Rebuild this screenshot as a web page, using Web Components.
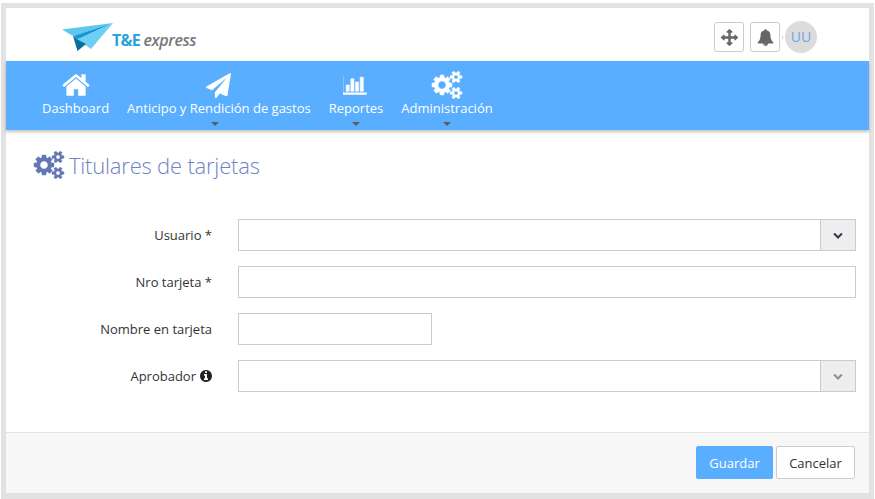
<!DOCTYPE html>
<html lang="es">
<head>
<meta charset="utf-8">
<title>Titulares de tarjetas</title>
<style>
    html, body { margin: 0; height: 100%; background: #fff; }
    body { font: 13px "Open Sans", sans-serif; color: #333; overflow: hidden; }
</style>
</head>
<body>
<app-frame>
    <app-header slot="header"></app-header>
    <app-nav slot="nav">
        <nav-item label="Dashboard" icon="home"></nav-item>
        <nav-item label="Anticipo y Rendición de gastos" icon="plane" caret="left"></nav-item>
        <nav-item label="Reportes" icon="chart" caret></nav-item>
        <nav-item label="Administración" icon="cogs" caret></nav-item>
    </app-nav>
    <page-title>Titulares de tarjetas</page-title>
    <form-row label="Usuario *"><combo-box></combo-box></form-row>
    <form-row label="Nro tarjeta *"><text-box></text-box></form-row>
    <form-row label="Nombre en tarjeta"><text-box narrow></text-box></form-row>
    <form-row label="Aprobador" info><combo-box disabled></combo-box></form-row>
    <form-footer slot="footer"></form-footer>
</app-frame>

<script>
const ICONS = {
    home: ['0 0 1792 1792', 'M1472 992v480q0 26-19 45t-45 19h-384v-384h-256v384h-384q-26 0-45-19t-19-45v-480q0-1 .5-3t.5-3l575-474 575 474q1 2 1 6zm223-69l-62 74q-8 9-21 11h-3q-13 0-21-7l-692-577-692 577q-12 8-24 7-13-2-21-11l-62-74q-8-10-7-23.500t11-21.500l719-599q32-26 76-26t76 26l244 204v-195q0-14 9-23t23-9h192q14 0 23 9t9 23v408l219 182q10 8 11 21.500t-7 23.500z'],
    plane: ['0 0 1792 1792', 'M1764 11q33 24 27 64l-256 1536q-5 29-32 45-14 8-31 8-11 0-24-5l-453-185-242 295q-18 23-49 23-13 0-22-4-19-7-30.500-23.500t-11.500-36.500v-349l864-1059-1069 925-395-162q-37-14-40-55-2-40 32-59l1664-960q15-9 32-9 20 0 36 11z'],
    chart: ['0 0 2048 1792', 'M512 896v512h-256v-512h256zm384-512v1024h-256v-1024h256zm1024 1152v128h-2048v-1536h128v1408h1920zm-640-896v768h-256v-768h256zm384-384v1152h-256v-1152h256z'],
    cogs: ['0 0 2048 1792', 'M960 896q0-106-75-181t-181-75-181 75-75 181 75 181 181 75 181-75 75-181zm768 512q0-52-38-90t-90-38-90 38-38 90q0 53 37.500 90.500t90.500 37.500 90.500-37.500 37.500-90.500zm0-1024q0-52-38-90t-90-38-90 38-38 90q0 53 37.500 90.500t90.500 37.500 90.500-37.500 37.500-90.500zm-384 421v185q0 10-7 19.500t-16 10.500l-155 24q-11 35-32 76 34 48 90 115 7 11 7 20 0 12-7 19-23 30-82.500 89.500t-78.500 59.500q-11 0-21-7l-115-90q-37 19-77 31-11 108-23 155-7 24-30 24h-186q-11 0-20-7.500t-10-17.500l-23-153q-34-10-75-31l-118 89q-7 7-20 7-11 0-21-8-144-133-144-160 0-9 7-19 10-14 41-53t47-61q-23-44-35-82l-152-24q-10-1-17-9.500t-7-19.500v-185q0-10 7-19.500t16-10.500l155-24q11-35 32-76-34-48-90-115-7-11-7-20 0-12 7-20 22-30 82-89t79-59q11 0 21 7l115 90q34-18 77-32 11-108 23-154 7-24 30-24h186q11 0 20 7.500t10 17.500l23 153q34 10 75 31l118-89q8-7 20-7 11 0 21 8 144 133 144 160 0 8-7 19-12 16-42 54t-45 60q23 48 34 82l152 23q10 2 17 10.500t7 19.500zm640 533v140q0 16-149 31-12 27-30 52 51 113 51 138 0 4-4 7-122 71-124 71-8 0-46-47t-52-68q-20 2-30 2t-30-2q-14 21-52 68t-46 47q-2 0-124-71-4-3-4-7 0-25 51-138-18-25-30-52-149-15-149-31v-140q0-16 149-31 13-29 30-52-51-113-51-138 0-4 4-7 4-2 35-20t59-34 30-16q8 0 46 46.500t52 67.500q20-2 30-2t30 2q51-71 92-112l6-2q4 0 124 70 4 3 4 7 0 25-51 138 17 23 30 52 149 15 149 31zm0-1024v140q0 16-149 31-12 27-30 52 51 113 51 138 0 4-4 7-122 71-124 71-8 0-46-47t-52-68q-20 2-30 2t-30-2q-14 21-52 68t-46 47q-2 0-124-71-4-3-4-7 0-25 51-138-18-25-30-52-149-15-149-31v-140q0-16 149-31 13-29 30-52-51-113-51-138 0-4 4-7 4-2 35-20t59-34 30-16q8 0 46 46.500t52 67.500q20-2 30-2t30 2q51-71 92-112l6-2q4 0 124 70 4 3 4 7 0 25-51 138 17 23 30 52 149 15 149 31z'],
    arrows: ['0 0 1792 1792', 'M1792 896q0 26-19 45l-256 256q-19 19-45 19t-45-19-19-45v-128h-384v384h128q26 0 45 19t19 45-19 45l-256 256q-19 19-45 19t-45-19l-256-256q-19-19-19-45t19-45 45-19h128v-384h-384v128q0 26-19 45t-45 19-45-19l-256-256q-19-19-19-45t19-45l256-256q19-19 45-19t45 19 19 45v128h384v-384h-128q-26 0-45-19t-19-45 19-45l256-256q19-19 45-19t45 19l256 256q19 19 19 45t-19 45-45 19h-128v384h384v-128q0-26 19-45t45-19 45 19l256 256q19 19 19 45z'],
    bell: ['0 0 1792 1792', 'M912 1696q0-16-16-16-59 0-101.500-42.500t-42.500-101.500q0-16-16-16t-16 16q0 73 51.500 124.500t124.500 51.500q16 0 16-16zm816-288q0 52-38 90t-90 38h-448q0 106-75 181t-181 75-181-75-75-181h-448q-52 0-90-38t-38-90q50-42 91-88t85-119.500 74.500-158.500 50-206 19.500-260q0-152 117-282.500t307-158.500q-8-19-8-39 0-40 28-68t68-28 68 28 28 68q0 20-8 39 190 28 307 158.500t117 282.500q0 139 19.500 260t50 206 74.500 158.500 85 119.500 91 88z'],
    info: ['0 0 1792 1792', 'M1152 1376v-160q0-14-9-23t-23-9h-96v-512q0-14-9-23t-23-9h-320q-14 0-23 9t-9 23v160q0 14 9 23t23 9h96v320h-96q-14 0-23 9t-9 23v160q0 14 9 23t23 9h448q14 0 23-9t9-23zm-128-896v-160q0-14-9-23t-23-9h-192q-14 0-23 9t-9 23v160q0 14 9 23t23 9h192q14 0 23-9t9-23zm640 416q0 209-103 385.500t-279.500 279.500-385.500 103-385.500-103-279.500-279.500-103-385.500 103-385.500 279.500-279.500 385.500-103 385.500 103 279.500 279.500 103 385.500z'],
    chevron: ['0 0 1792 1792', 'M1683 808l-742 741q-19 19-45 19t-45-19l-742-741q-19-19-19-45.500t19-45.500l166-165q19-19 45-19t45 19l531 531 531-531q19-19 45-19t45 19l166 165q19 19 19 45.500t-19 45.500z']
};

function icon(name, w, h) {
    const [box, d] = ICONS[name];
    return `<svg width="${w}" height="${h}" viewBox="${box}" fill="currentColor" style="display:block"><path d="${d}"/></svg>`;
}

class AppFrame extends HTMLElement {
    constructor() {
        super();
        this.attachShadow({ mode: 'open' });
        this.shadowRoot.innerHTML = `
            <style>
                :host {
                    display: flex;
                    flex-direction: column;
                    box-sizing: border-box;
                    margin: 3px 1px 0;
                    height: 496px;
                    border: 5px solid #e2e2e2;
                    border-bottom-width: 6px;
                    background: #fff;
                }
                .form { flex: 1; display: flex; flex-direction: column; gap: 15px; }
            </style>
            <slot name="header"></slot>
            <slot name="nav"></slot>
            <div class="form"><slot></slot></div>
            <slot name="footer"></slot>`;
    }
}

class AppHeader extends HTMLElement {
    constructor() {
        super();
        this.attachShadow({ mode: 'open' });
        this.shadowRoot.innerHTML = `
            <style>
                :host {
                    display: flex;
                    align-items: center;
                    box-sizing: border-box;
                    height: 53px;
                    padding: 5px 52px 0 55px;
                }
                .logo { display: flex; align-items: flex-end; }
                .brand { margin: 0 0 1px -1px; line-height: 18px; white-space: nowrap; }
                .te { font: 700 16px "Open Sans", sans-serif; letter-spacing: -.7px; color: #2ba3dc; }
                .ex { font: italic 600 16px "Open Sans", sans-serif; letter-spacing: -.4px; color: #77787b; }
                .tools { margin-left: auto; display: flex; align-items: center; }
                .tool {
                    box-sizing: border-box;
                    width: 30px;
                    height: 30px;
                    display: grid;
                    place-items: center;
                    border: 1px solid #ccc;
                    border-radius: 3px;
                    color: #666;
                    margin-right: 6px;
                }
                .tool + .tool { margin-right: 0; }
                .dot { width: 1px; height: 3px; margin: 0 2px 0 2px; background: #a9d4f5; }
                .avatar {
                    width: 32px;
                    height: 32px;
                    border-radius: 50%;
                    background: #dcdcdc;
                    color: #6fa6e2;
                    font-size: 14px;
                    line-height: 32px;
                    text-align: center;
                }
            </style>
            <div class="logo">
                <svg width="52" height="30" viewBox="61 22 52 30">
                    <polygon points="62,29.500 113,23 73,36" fill="#5cc8ef"/>
                    <polygon points="113,23 73,36 77.500,39.500" fill="#169ad6"/>
                    <polygon points="113,23 77.500,39.500 91,49" fill="#6dcff6"/>
                    <polygon points="73,36 77.500,39.500 86,44 77.500,51" fill="#0b6e99"/>
                </svg>
                <div class="brand"><span class="te">T&amp;E</span> <span class="ex">express</span></div>
            </div>
            <div class="tools">
                <div class="tool">${icon('arrows', 17, 17)}</div>
                <div class="tool">${icon('bell', 17, 17)}</div>
                <div class="dot"></div>
                <div class="avatar">UU</div>
            </div>`;
    }
}

class AppNav extends HTMLElement {
    constructor() {
        super();
        this.attachShadow({ mode: 'open' });
        this.shadowRoot.innerHTML = `
            <style>
                :host {
                    display: flex;
                    height: 69px;
                    padding-left: 27px;
                    background: #5aaeff;
                    box-shadow: 0 2px 3px rgba(0,0,0,.25);
                    position: relative;
                }
            </style>
            <slot></slot>`;
    }
}

class NavItem extends HTMLElement {
    constructor() {
        super();
        this.attachShadow({ mode: 'open' });
        const size = {
            home: [30, 30], plane: [25, 25], chart: [25, 22], cogs: [32, 28]
        }[this.getAttribute('icon')];
        this.shadowRoot.innerHTML = `
            <style>
                :host {
                    display: flex;
                    flex-direction: column;
                    align-items: center;
                    padding: 0 9px;
                    color: #fff;
                    font: 13px "Open Sans", sans-serif;
                    white-space: nowrap;
                }
                .ico { height: 30px; margin-top: 9px; display: grid; place-items: center; }
                :host([icon="chart"]) path { stroke: currentColor; stroke-width: 45; }
                :host([icon="cogs"]) path { stroke: currentColor; stroke-width: 30; }
                .txt { line-height: 18px; margin-top: -1px; }
                .caret {
                    width: 0;
                    height: 0;
                    margin-top: 5px;
                    border: 4px solid transparent;
                    border-top: 4px solid #5a5f66;
                    border-bottom: 0;
                }
                :host([caret="left"]) .caret { margin-right: 8px; }
            </style>
            <div class="ico">${icon(this.getAttribute('icon'), size[0], size[1])}</div>
            <div class="txt">${this.getAttribute('label')}</div>
            ${this.hasAttribute('caret') ? '<div class="caret"></div>' : ''}`;
    }
}

class PageTitle extends HTMLElement {
    constructor() {
        super();
        this.attachShadow({ mode: 'open' });
        this.shadowRoot.innerHTML = `
            <style>
                :host {
                    display: flex;
                    align-items: center;
                    gap: 4px;
                    padding: 19px 0 0 27px;
                    height: 32px;
                    margin-bottom: 23px;
                    color: #6e83c4;
                    font: 300 22px/32px "Open Sans", sans-serif;
                    letter-spacing: -.2px;
                }
                .ico { color: #6277b4; }
                .ico path { stroke: currentColor; stroke-width: 30; }
            </style>
            <div class="ico">${icon('cogs', 32, 28)}</div>
            <div><slot></slot></div>`;
    }
}

class FormRow extends HTMLElement {
    constructor() {
        super();
        this.attachShadow({ mode: 'open' });
        const info = this.hasAttribute('info')
            ? `<span class="info">${icon('info', 14, 14)}</span>` : '';
        this.shadowRoot.innerHTML = `
            <style>
                :host {
                    display: grid;
                    grid-template-columns: 206px 1fr;
                    column-gap: 26px;
                    align-items: center;
                    padding-right: 13px;
                    color: #333;
                    font: 13px "Open Sans", sans-serif;
                }
                label { display: flex; justify-content: flex-end; align-items: center; gap: 3px; }
                .info { color: #222; margin-right: -1px; }
            </style>
            <label>${this.getAttribute('label')}${info}</label>
            <div><slot></slot></div>`;
    }
}

class TextBox extends HTMLElement {
    constructor() {
        super();
        this.attachShadow({ mode: 'open' });
        this.shadowRoot.innerHTML = `
            <style>
                :host { display: block; width: 100%; }
                :host([narrow]) { width: 194px; }
                input {
                    display: block;
                    box-sizing: border-box;
                    width: 100%;
                    height: 32px;
                    padding: 0 10px;
                    border: 1px solid #ccc;
                    outline: 0;
                    background: #fff;
                }
            </style>
            <input type="text">`;
    }
}

class ComboBox extends HTMLElement {
    constructor() {
        super();
        this.attachShadow({ mode: 'open' });
        this.shadowRoot.innerHTML = `
            <style>
                :host { display: flex; height: 32px; box-sizing: border-box; border: 1px solid #ccc; }
                input { flex: 1; min-width: 0; border: 0; outline: 0; padding: 0 10px; background: #fff; }
                .btn {
                    width: 34px;
                    display: grid;
                    place-items: center;
                    border-left: 1px solid #ccc;
                    background: #eee;
                    color: #2f3b4c;
                }
                :host([disabled]) .btn { color: #8a8f96; }
            </style>
            <input type="text">
            <div class="btn">${icon('chevron', 10, 10)}</div>`;
    }
}

class FormFooter extends HTMLElement {
    constructor() {
        super();
        this.attachShadow({ mode: 'open' });
        this.shadowRoot.innerHTML = `
            <style>
                :host {
                    display: flex;
                    justify-content: flex-end;
                    gap: 3px;
                    box-sizing: border-box;
                    height: 61px;
                    padding: 13px 14px 0 0;
                    border-top: 1px solid #e2e2e2;
                    background: #f7f7f7;
                }
                button {
                    height: 33px;
                    font: 13px "Open Sans", sans-serif;
                    border-radius: 2px;
                    padding: 0;
                }
                .save { width: 77px; border: 1px solid #5aaeff; background: #5aaeff; color: #fff; }
                .cancel { width: 79px; border: 1px solid #ccc; background: #fff; color: #333; }
            </style>
            <button class="save" type="button">Guardar</button>
            <button class="cancel" type="button">Cancelar</button>`;
    }
}

customElements.define('app-frame', AppFrame);
customElements.define('app-header', AppHeader);
customElements.define('app-nav', AppNav);
customElements.define('nav-item', NavItem);
customElements.define('page-title', PageTitle);
customElements.define('form-row', FormRow);
customElements.define('text-box', TextBox);
customElements.define('combo-box', ComboBox);
customElements.define('form-footer', FormFooter);
</script>
</body>
</html>
